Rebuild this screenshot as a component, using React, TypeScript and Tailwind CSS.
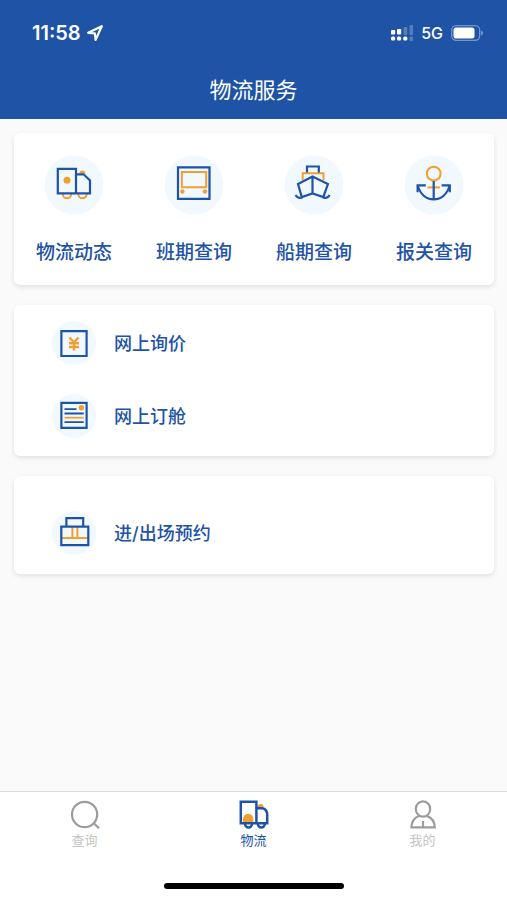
import React from "react";

const BLUE = "#1e53a5";
const ORANGE = "#f0a030";
const TINT = "#f1f8fe";
const GRAY = "#9c9c9c";

type IconProps = { children: React.ReactNode };

function LargeIcon({ children }: IconProps) {
  return (
    <svg className="size-15" viewBox="0 0 60 60" fill="none" stroke={BLUE} strokeWidth="2.2" aria-hidden="true">
      <circle cx="30" cy="30" r="29.5" fill={TINT} stroke="none" />
      {children}
    </svg>
  );
}

function SmallIcon({ children }: IconProps) {
  return (
    <svg className="size-11" viewBox="0 0 44 44" fill="none" stroke={BLUE} strokeWidth="2.2" aria-hidden="true">
      <circle cx="22" cy="22" r="22" fill={TINT} stroke="none" />
      {children}
    </svg>
  );
}

function TruckIcon() {
  return (
    <LargeIcon>
      <g stroke={ORANGE} strokeWidth="2">
        <path d="M18.8 39a4.2 4.2 0 0 0 8.4 0M34.3 39a4.2 4.2 0 0 0 8.4 0" />
      </g>
      <path d="M35.3 18.5a3 3 0 0 1 6 0z" fill={ORANGE} stroke="none" />
      <path d="M13.8 13.8H32v24.6H13.8zM32 19.3h7.6l6.4 6.2v12.9H32" />
      <circle cx="23" cy="25.3" r="3.5" fill={ORANGE} stroke="none" />
    </LargeIcon>
  );
}

function BusIcon() {
  return (
    <LargeIcon>
      <path d="M14 12.3h31.5v31.5H14z" />
      <path d="M17.8 17h24.4v15.3H17.8z" stroke={ORANGE} strokeWidth="2" />
      <circle cx="18.4" cy="36.5" r="2.2" fill={ORANGE} stroke="none" />
      <circle cx="41" cy="36.5" r="2.2" fill={ORANGE} stroke="none" />
    </LargeIcon>
  );
}

function ShipIcon() {
  return (
    <LargeIcon>
      <path d="M18.7 25.2v-6.9h20.8v6.9" stroke={ORANGE} strokeWidth="2" />
      <path d="M23 17.5v-6h11.8v6" />
      <path d="M28.5 21.6L14 29l3.8 13 10.7-3.5L39.3 42l4.6-13zM28.5 21.6v16.9" />
      <path d="M11.6 40c1.6 2.8 4.3 3.4 7 2.2M45.6 40c-1.6 2.8-4.3 3.4-7 2.2" />
    </LargeIcon>
  );
}

function AnchorIcon() {
  return (
    <LargeIcon>
      <circle cx="29.7" cy="18.6" r="6.9" stroke={ORANGE} strokeWidth="2" />
      <path d="M23.5 32.4h12.4" stroke={ORANGE} strokeWidth="2" />
      <path d="M29.7 26v18.5M13.8 30.8c2.4 8 8.2 13.6 15.9 13.6s13.5-5.6 15.9-13.6" />
      <path d="M21.8 30.4h-8.2v6.8M37.6 30.4h8.2v6.8" />
    </LargeIcon>
  );
}

function QuoteIcon() {
  return (
    <SmallIcon>
      <path d="M9.4 10.1h25.2V35H9.4z" />
      <path d="M17.5 16.5l4.500 5 4.500-5M22 21.500v8M17 22.300h10M17 26h10" stroke={ORANGE} strokeWidth="2.4" />
    </SmallIcon>
  );
}

function BookingIcon() {
  return (
    <SmallIcon>
      <path d="M9.4 8.9h25.2v24.9H9.4z" />
      <path d="M12.5 15.200h12M12.5 19.500h19.200M12.5 28.200h19.200" strokeWidth="1.8" />
      <path d="M12.5 23.700h19.200" stroke={ORANGE} strokeWidth="1.8" />
      <circle cx="29.4" cy="13.8" r="2.7" fill={ORANGE} stroke="none" />
    </SmallIcon>
  );
}

function GateIcon() {
  return (
    <SmallIcon>
      <path d="M10 27h26M20.4 16v11M25.4 16v11" stroke={ORANGE} strokeWidth="2" />
      <path d="M14.4 15.4V7.200h16.800v8.200M9.300 15.700h27v18.500h-27z" />
    </SmallIcon>
  );
}

function SearchTabIcon() {
  return (
    <svg className="size-[30px]" viewBox="0 0 30 30" fill="none" stroke={GRAY} strokeWidth="2.2" aria-hidden="true">
      <circle cx="14.6" cy="14.5" r="12.6" />
      <path d="M23 22.5l6 5.7" />
    </svg>
  );
}

function TruckTabIcon() {
  return (
    <svg className="size-[30px]" viewBox="0 0 30 30" fill="none" stroke={BLUE} strokeWidth="2.5" aria-hidden="true">
      <path d="M4 22V19a5.200 5.200 0 0 1 10.400 0v3z" fill={ORANGE} stroke="none" />
      <path d="M18.600 7a3 3 0 0 1 6 0z" fill={ORANGE} stroke="none" />
      <path d="M1.8 1.7h15.600v21.500H1.8zM17.400 8.200h5.800c3 .5 5 3 5 6.500v8.500H17.400" />
      <path d="M6 23.500a3.500 4 0 1 0 7 0M18.800 23.500a3.500 4 0 1 0 7 0" />
    </svg>
  );
}

function PersonTabIcon() {
  return (
    <svg className="size-[30px]" viewBox="0 0 30 30" fill="none" stroke={GRAY} strokeWidth="2.2" aria-hidden="true">
      <ellipse cx="15" cy="9" rx="7.2" ry="7.7" />
      <path d="M10.8 16.100C6 18 3.600 22.500 3.400 27.400h23.400c-.2-4.900-2.600-9.400-7.600-11.300M15 21v6.400" />
    </svg>
  );
}

const services = [
  { label: "物流动态", Icon: TruckIcon },
  { label: "班期查询", Icon: BusIcon },
  { label: "船期查询", Icon: ShipIcon },
  { label: "报关查询", Icon: AnchorIcon },
];

const tabs = [
  { label: "查询", Icon: SearchTabIcon, active: false },
  { label: "物流", Icon: TruckTabIcon, active: true },
  { label: "我的", Icon: PersonTabIcon, active: false },
];

function StatusBar() {
  return (
    <div className="flex h-[66px] items-center justify-between pr-6 pl-8">
      <div className="flex items-center gap-1.5">
        <span className="text-[20px] font-semibold">11:58</span>
        <svg className="size-4" viewBox="0 0 16 16" fill="none" stroke="#fff" strokeWidth="2.2" strokeLinejoin="round" aria-hidden="true">
          <path d="M14.8 1.2L1.2 7.8l6.6.6.8 6.4z" />
        </svg>
      </div>
      <div className="flex items-center gap-2">
        <svg className="h-4 w-[22px]" viewBox="0 0 22 16" fill="#fff" aria-hidden="true">
          <g opacity="0.25">
            <rect x="12.5" y="2" width="3.8" height="8" rx="1" />
            <rect x="18.5" y="0" width="3.5" height="10" rx="1" />
            <rect x="18.5" y="11.5" width="3.5" height="4.5" rx="1" />
          </g>
          <rect x="0" y="5" width="4.2" height="4.5" rx="1" />
          <rect x="6" y="4" width="4.2" height="5.5" rx="1" />
          <rect x="0" y="11.5" width="4.2" height="4" rx="1.5" />
          <rect x="6" y="11.5" width="4.2" height="4" rx="1.5" />
          <rect x="12.2" y="11.5" width="4.2" height="4" rx="1.5" />
        </svg>
        <span className="text-[16px] font-medium">5G</span>
        <svg className="h-4 w-8" viewBox="0 0 32 16" fill="none" aria-hidden="true">
          <rect x="0.7" y="0.7" width="28" height="14.6" rx="4.5" stroke="#fff" strokeOpacity="0.4" strokeWidth="1.3" />
          <rect x="2.5" y="2.6" width="21" height="10.8" rx="2.5" fill="#fff" />
          <path d="M30.3 5.500c2 1 2 4 0 5z" fill="#fff" fillOpacity="0.5" />
        </svg>
      </div>
    </div>
  );
}

function MenuRow({ label, icon }: { label: string; icon: React.ReactNode }) {
  return (
    <button type="button" className="flex h-[73px] w-full items-center gap-[18px] pl-[38px] text-[18px] font-medium">
      {icon}
      <span className="pt-0.5">{label}</span>
    </button>
  );
}

export default function App() {
  return (
    <div className="flex min-h-screen flex-col bg-[#fafafa] font-['Inter','Noto_Sans_CJK_SC',sans-serif] text-[#1e53a5]">
      <header className="bg-[#1e53a5] pb-[5px] text-white">
        <StatusBar />
        <h1 className="text-center text-[22px] leading-12 font-normal">物流服务</h1>
      </header>

      <main className="flex flex-1 flex-col gap-5 pt-3.5 pr-[13px] pb-5 pl-3.5">
        <section className="grid grid-cols-4 rounded-md bg-white pt-[22px] pb-[18px] shadow-[0_2px_5px_rgba(0,0,0,0.1)]">
          {services.map(({ label, Icon }) => (
            <button key={label} type="button" className="flex flex-col items-center gap-6 text-[19px] leading-7 font-medium">
              <Icon />
              {label}
            </button>
          ))}
        </section>

        <section className="rounded-md bg-white pt-px pb-1 shadow-[0_2px_5px_rgba(0,0,0,0.1)]">
          <MenuRow label="网上询价" icon={<QuoteIcon />} />
          <MenuRow label="网上订舱" icon={<BookingIcon />} />
        </section>

        <section className="rounded-md bg-white pt-5 pb-[5px] shadow-[0_2px_5px_rgba(0,0,0,0.1)]">
          <MenuRow label="进/出场预约" icon={<GateIcon />} />
        </section>
      </main>

      <footer className="border-t border-[#d9d9d9] bg-white pb-[11px]">
        <nav className="grid grid-cols-3 pt-2">
          {tabs.map(({ label, Icon, active }) => (
            <a
              key={label}
              href="#"
              aria-current={active ? "page" : undefined}
              className={`flex flex-col items-center text-[13px] leading-5 ${active ? "text-[#1e53a5]" : "text-[#c4c4c4]"}`}
            >
              <Icon />
              {label}
            </a>
          ))}
        </nav>
        <div className="mx-auto mt-[33px] h-1.5 w-[180px] rounded-full bg-black" />
      </footer>
    </div>
  );
}
